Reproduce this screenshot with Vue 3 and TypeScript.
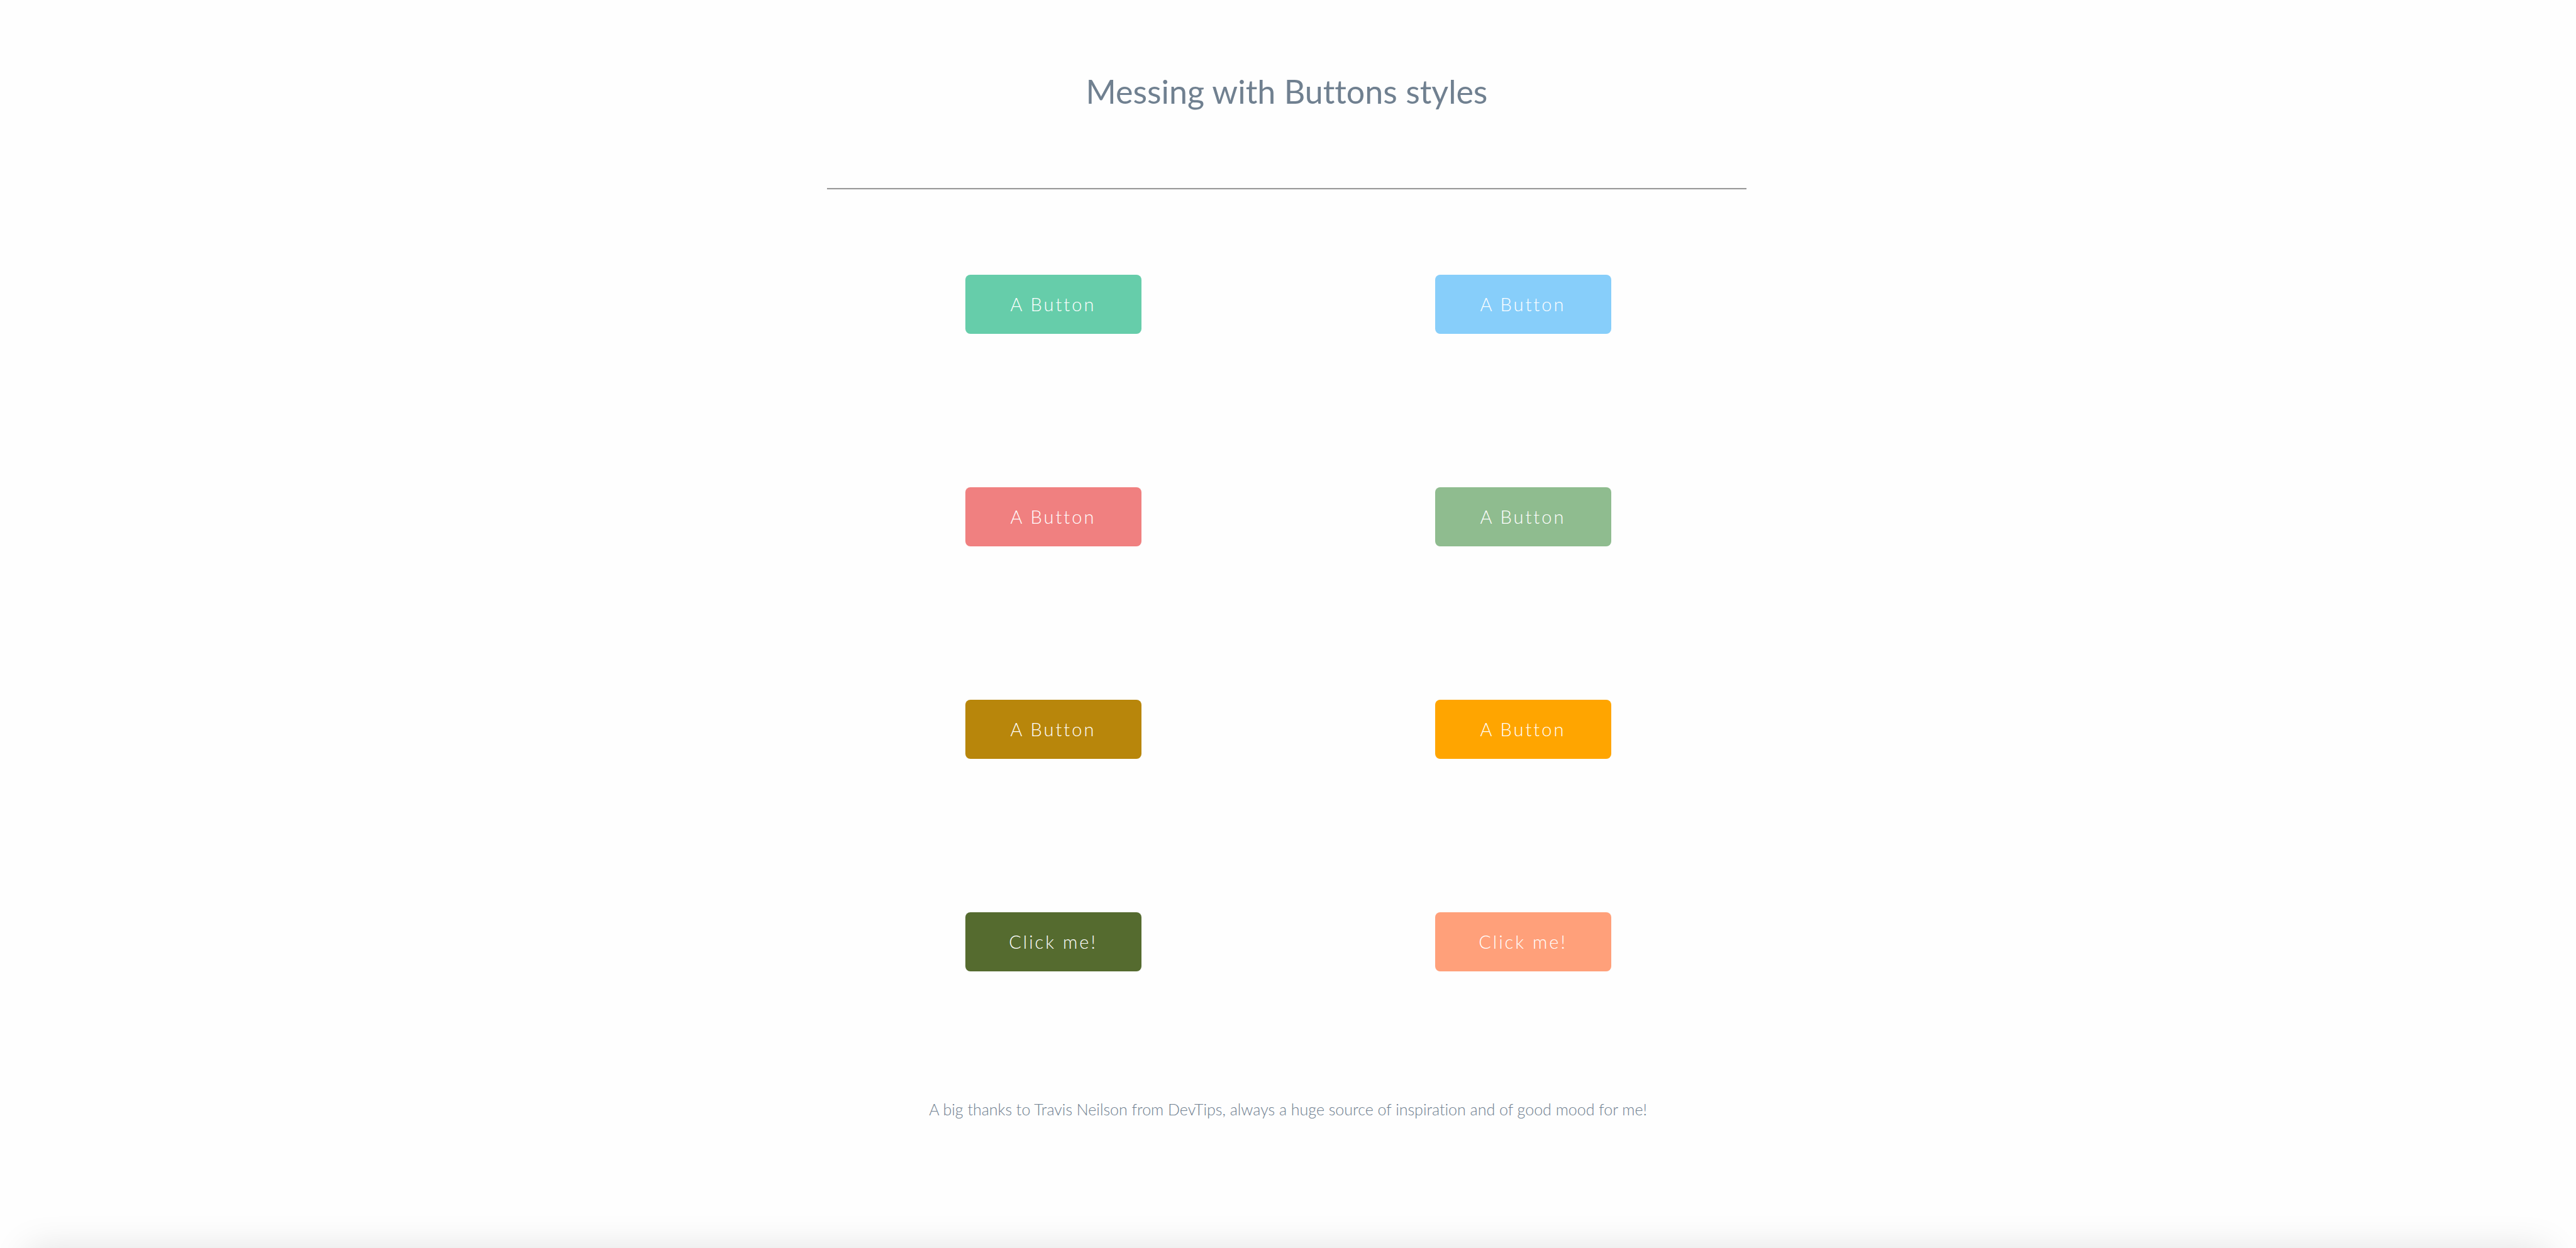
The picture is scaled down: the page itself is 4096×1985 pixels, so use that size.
<script setup lang="ts">
interface DemoButton {
  label: string
  tone: string
}

const buttons: DemoButton[] = [
  { label: 'A Button', tone: 'aquamarine' },
  { label: 'A Button', tone: 'sky' },
  { label: 'A Button', tone: 'coral' },
  { label: 'A Button', tone: 'sea' },
  { label: 'A Button', tone: 'goldenrod' },
  { label: 'A Button', tone: 'orange' },
  { label: 'Click me!', tone: 'olive' },
  { label: 'Click me!', tone: 'salmon' },
]
</script>

<template>
  <div class="page">
    <header class="header">
      <h1 class="title">Messing with Buttons styles</h1>
      <hr class="rule" />
    </header>
    <main class="grid">
      <div v-for="(button, index) in buttons" :key="index" class="cell">
        <button type="button" class="btn" :class="button.tone">{{ button.label }}</button>
      </div>
    </main>
    <footer class="footer">
      <p class="thanks">
        A big thanks to Travis Neilson from DevTips, always a huge source of inspiration and of good mood for me!
      </p>
    </footer>
    <div class="shade" aria-hidden="true"></div>
  </div>
</template>

<style>
body {
  background: #fefefe;
}
</style>

<style scoped>
.page {
  position: relative;
  box-sizing: border-box;
  min-height: 100vh;
  overflow: hidden;
  font-family: Lato, "Liberation Sans", sans-serif;
  font-variant-ligatures: none;
  color: slategray;
  text-align: center;
}

.header {
  padding: 113px 4px 0 0;
}

.title {
  margin: 0 0 122px;
  font-size: 52px;
  line-height: 64px;
  font-weight: 400;
}

.rule {
  box-sizing: border-box;
  width: 100%;
  max-width: 1462px;
  height: 3px;
  margin: 0 auto;
  border: 0 solid #9a9a9a;
  border-top-width: 2px;
  border-bottom: 1px solid #eeeeee;
}

.grid {
  display: grid;
  grid-template-columns: 1fr 1fr;
  max-width: 1494px;
  margin: 135px auto 0;
}

.cell {
  height: 338px;
}

.btn {
  width: 280px;
  height: 94px;
  padding: 0 0 2px;
  border: 0;
  border-radius: 8px;
  font-family: inherit;
  font-size: 29px;
  font-weight: 300;
  letter-spacing: 3px;
  color: #ffffff;
  cursor: pointer;
}

.aquamarine { background: mediumaquamarine; }
.sky { background: lightskyblue; }
.coral { background: lightcoral; }
.sea { background: darkseagreen; }
.goldenrod { background: darkgoldenrod; }
.orange { background: orange; }
.olive { background: darkolivegreen; }
.salmon { background: lightsalmon; }

.footer {
  margin-top: -41px;
}

.thanks {
  margin: 0;
  font-size: 25px;
  line-height: 32px;
  font-weight: 300;
}

.shade {
  position: absolute;
  right: 44px;
  bottom: -92px;
  left: 44px;
  height: 90px;
  box-shadow: 0 0 60px rgba(0, 0, 0, 0.12);
}
</style>
